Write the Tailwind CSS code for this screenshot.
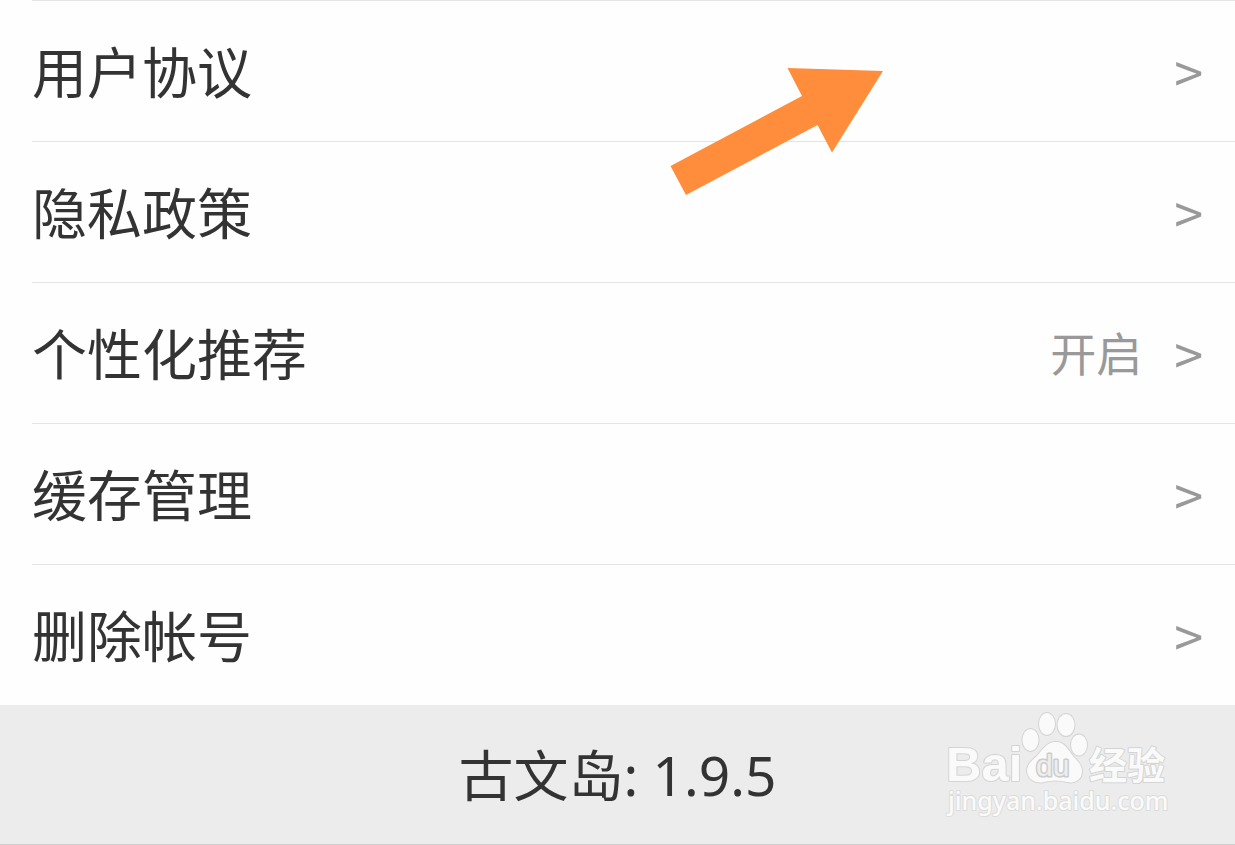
<!DOCTYPE html>
<html lang="zh-CN">
<head>
<meta charset="utf-8">
<meta name="viewport" content="width=device-width, initial-scale=1">
<title>设置</title>
<script src="https://cdn.jsdelivr.net/npm/@tailwindcss/browser@4"></script>
</head>
<body class="relative flex min-h-screen flex-col bg-[#fefefe] font-['Noto_Sans_CJK_SC',sans-serif] text-[55px] leading-[80px] text-[#333]">
<main>
  <ul class="pl-8">
    <li class="border-t border-[#e4e4e4]"><a href="#agreement" class="flex h-35 items-center pr-8"><span class="grow pb-1">用户协议</span><span class="text-[52px] text-[#999]">&gt;</span></a></li>
    <li class="border-t border-[#e4e4e4]"><a href="#privacy" class="flex h-35 items-center pr-8"><span class="grow pb-1">隐私政策</span><span class="text-[52px] text-[#999]">&gt;</span></a></li>
    <li class="border-t border-[#e4e4e4]"><a href="#recommend" class="flex h-35 items-center pr-8"><span class="grow pb-1">个性化推荐</span><span class="mr-8 pb-1 text-[46px] text-[#999]">开启</span><span class="text-[52px] text-[#999]">&gt;</span></a></li>
    <li class="border-t border-[#e4e4e4]"><a href="#cache" class="flex h-35 items-center pr-8"><span class="grow pb-1">缓存管理</span><span class="text-[52px] text-[#999]">&gt;</span></a></li>
    <li class="border-t border-[#e4e4e4]"><a href="#delete" class="flex h-35 items-center pr-8"><span class="grow pb-1">删除帐号</span><span class="text-[52px] text-[#999]">&gt;</span></a></li>
  </ul>
</main>
<footer class="relative flex grow items-center justify-center border-b border-[#cfcfcf] bg-[#ececec] font-['Noto_Sans','Noto_Sans_CJK_SC',sans-serif]">
  <p>古文岛: 1.9.5</p>
  <svg class="absolute top-0 right-[55px]" width="250" height="130" viewBox="930 705 250 130" role="img" aria-label="Baidu 经验" fill="#fafafa" stroke="#d4d4d4" stroke-width="2" stroke-linejoin="round" paint-order="stroke">
    <text x="946" y="781" font-family="Liberation Sans" font-weight="700" font-size="49">Bai</text>
    <ellipse cx="1030.500" cy="740" rx="8" ry="11"/>
    <ellipse cx="1047" cy="724" rx="8" ry="11"/>
    <ellipse cx="1066" cy="725" rx="8.500" ry="11"/>
    <ellipse cx="1079" cy="745" rx="8" ry="10.500"/>
    <path d="M1056 742C1047 742 1042 750 1037 756C1031 761 1027 765 1027 771C1028 780 1036 784 1044 782Q1056 779 1067 782C1076 784 1082 779 1082 771C1082 764 1077 761 1073 756C1068 749 1064 742 1056 742Z"/>
    <text x="1036" y="776" font-family="Liberation Sans" font-size="30" fill="#eeeeee" stroke="#cccccc" stroke-width="3">du</text>
    <text x="1089" y="779" font-family="Noto Sans CJK SC" font-weight="700" font-size="38">经验</text>
    <text x="948" y="810" font-family="Noto Sans" font-weight="500" font-size="25" stroke="#dcdcdc">jingyan.baidu.com</text>
  </svg>
</footer>
<svg class="absolute top-[60px] left-[54%]" width="226" height="140" viewBox="667 60 226 140" aria-hidden="true"><path d="M787.500 68L883 71L832 152.500L817.500 125L686 195L670.500 166L802 96Z" fill="#ff8d3b"/></svg>
</body>
</html>
